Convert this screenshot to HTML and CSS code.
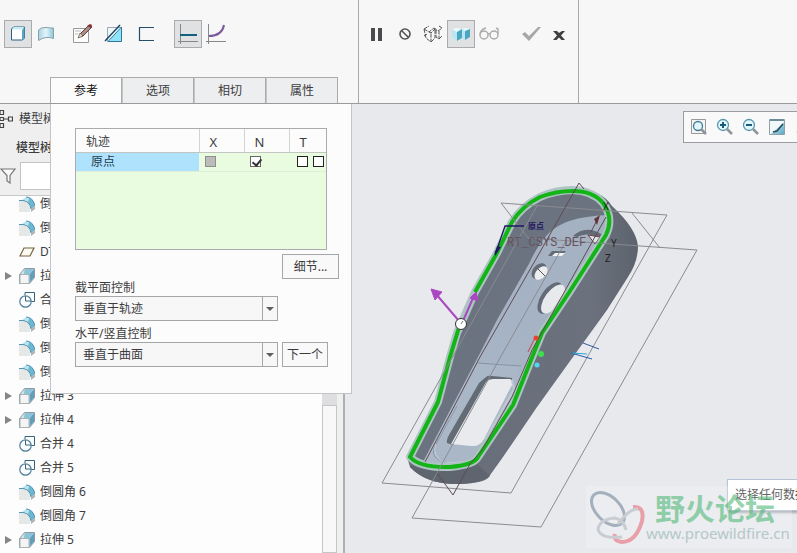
FILE: index.html
```html
<!DOCTYPE html>
<html lang="zh-CN">
<head>
  <meta charset="UTF-8">
  <meta name="viewport" content="width=device-width, initial-scale=1.0">
  <title>扫描</title>
  <link rel="stylesheet" href="styles.css">
</head>
<body>
  <!-- shared tree icons -->
  <svg class="defs" width="0" height="0">
    <defs>
      <linearGradient id="blue" x1="0" y1="0" x2="1" y2="1">
        <stop offset="0" stop-color="#e4f8fd"/>
        <stop offset="1" stop-color="#5aa9c4"/>
      </linearGradient>
      <linearGradient id="sheet" x1="0" y1="0" x2="1" y2="0">
        <stop offset="0" stop-color="#a9d3e0"/>
        <stop offset=".5" stop-color="#e2f6fb"/>
        <stop offset="1" stop-color="#8cc6d8"/>
      </linearGradient>
      <symbol id="round" viewBox="0 0 16 16">
        <path d="M0 5h5q6 2 6 7v4H0z" fill="#e6e8e8"/>
        <path d="M3 4l4-3q8 1 9 9l-4 3q-1-7-9-9z" fill="#b5e5f2"/>
        <path d="M10 2q5 2 6 8l-4 3q0-4-3-6z" fill="#6db7d0"/>
        <path d="M0 4.500h4q7 1 8 8.500M7 1q7 0 9 9" fill="none" stroke="#5593ab"/>
        <path d="M12 13l4-3v3l-4 3z" fill="#a9b6bb"/>
      </symbol>
      <symbol id="extrude" viewBox="0 0 16 16">
        <path d="M.500 6.500l5-6h10v9l-5 6h-10z" fill="#cfe3ea" stroke="#8e9ba1"/>
        <path d="M15 1v8.500L10.500 15V6.500z" fill="#5c9fbb"/>
        <path d="M5.500 1H15l-4.500 5.500H5z" fill="#8dc3d8"/>
        <path d="M1 6.500h9v9H1z" fill="#f5f5f5" stroke="#abb2b5"/>
      </symbol>
      <symbol id="merge" viewBox="0 0 16 16">
        <path d="M6 3V.500h9.500v9H12M6.500 4v5H12" fill="none" stroke="#33637f"/>
        <circle cx="6.500" cy="9.500" r="5.700" fill="none" stroke="#4c7f9b" stroke-width="1.200"/>
      </symbol>
      <symbol id="plane" viewBox="0 0 16 16">
        <path d="M1 12L5 4h10l-4 8z" fill="#fdfbf2" stroke="#75643e" stroke-width="1.200"/>
      </symbol>
    </defs>
  </svg>

  <header class="ribbon">
    <section class="ribbon-main">
      <div class="tools">
        <button class="tool on" title="实体"><svg width="18" height="18"><path d="M2.500 4l2-2h11v11l-2 2h-11z" fill="#fff" stroke="#2d5f7d"/><path d="M13 5l2.500-3v11L13 15z" fill="#5aa5c3"/><path d="M3 4.500L5 2h10l-2 2.500z" fill="#c5edf8"/></svg></button>
        <button class="tool" title="曲面"><svg width="18" height="18"><path d="M1.500 5Q4 2 9 2.500T16.500 3v10.500Q13 12 9 12.500T1.500 15.500z" fill="url(#sheet)" stroke="#8aa0a9"/></svg></button>
        <button class="tool gap-8" title="草绘"><svg width="22" height="22"><path d="M2.500 5.500h15v14h-15z" fill="#fdfdfd" stroke="#999"/><path d="M4 8h6M4 11h3" stroke="#bbb"/><path d="M8 14l2-4 8-8 3 2-9 9z" fill="#b08a84" stroke="#5a4543"/><path d="M7 15l2-5 3 3z" fill="#ecd9b0" stroke="#444" stroke-width=".6"/><path d="M16 3l4 2 1-3-2-1z" fill="#833"/></svg></button>
        <button class="tool gap-4" title="移除材料"><svg width="20" height="20"><path d="M3.500 3.500h14v14h-14z" fill="#eef6f8" stroke="#9ab"/><path d="M17.500 3v14.500H4z" fill="#8fe4fb" stroke="#33789b"/><path d="M1 17L16 1" stroke="#1b4764" stroke-width="1.500"/></svg></button>
        <button class="tool gap-4" title="薄板"><svg width="18" height="18"><path d="M17 2.500H2.500v13H17" fill="none" stroke="#234e6c" stroke-width="1.200"/></svg></button>
        <button class="tool on gap-14" title="恒定截面"><svg width="22" height="22"><path d="M3.500 1v20M1 18.500h20" stroke="#85898c"/><path d="M3 12h17" stroke="#14607f" stroke-width="2"/></svg></button>
        <button class="tool" title="可变截面"><svg width="22" height="22"><path d="M3.500 1v20M1 18.500h20" stroke="#85898c"/><path d="M4 13Q17 13 19 2" fill="none" stroke="#7c5a9e" stroke-width="2"/></svg></button>
      </div>
      <nav class="tabs">
        <button class="tab active">参考</button>
        <button class="tab">选项</button>
        <button class="tab">相切</button>
        <button class="tab">属性</button>
      </nav>
    </section>
    <section class="ribbon-confirm">
      <div class="tools">
        <button class="tool" title="暂停"><svg width="14" height="16"><path d="M1 2h4v13H1zM8 2h4v13H8z" fill="#4a4a4c"/></svg></button>
        <button class="tool" title="无预览"><svg width="14" height="14"><circle cx="7" cy="7" r="5" fill="none" stroke="#555" stroke-width="1.600"/><path d="M3.500 3.500l7 7" stroke="#555" stroke-width="1.600"/></svg></button>
        <button class="tool" title="分离"><svg width="20" height="18"><path d="M1 4l5 3 5-4M1 4l5-3M1 4l2 9 5 4V8M6 7l2 1 4-4M8 17l4-4V3M11 3l4 3 4-3-3-2M13 5v7l3 2V6M16 14l3-3M1 11l3-2" fill="none" stroke="#555" stroke-dasharray="4 1"/></svg></button>
        <button class="tool on" title="连接"><svg width="20" height="16"><path d="M1 3l5-1 4 1 4-1 5 1v8l-5 3-3-2-4 3-6-4z" fill="#e9fafe"/><path d="M6 6l5-3v9l-5 3zM14 5l5-2v8l-5 3z" fill="#4ea5bf"/><path d="M1 3l5 3v9l-5-4zM11 3l3 2v9l-3-2z" fill="#b8e6f2"/></svg></button>
        <button class="tool" title="几何预览"><svg width="20" height="14"><g fill="none" stroke="#aaa" stroke-width="1.400"><circle cx="5" cy="8" r="4"/><circle cx="15" cy="8" r="4"/><path d="M9 7q1-1 2 0M1 7q1-5 6-6M19 7V2l-2-1"/></g></svg></button>
        <button class="tool gap-14" title="确定"><svg width="20" height="16"><path d="M1 8l3-2 4 4 9-9h3L8 15z" fill="#a8a8a8"/></svg></button>
        <button class="tool" title="取消"><svg width="14" height="14"><path d="M1 4h4l2 2 3-2h3L9 8.500l4 4.500H9.500L7 10.500 4.500 13H1l4-4.500z" fill="#3f3f42"/></svg></button>
      </div>
    </section>
  </header>

  <main class="workspace">
    <aside class="sidebar">
      <div class="tree-head">
        <div class="tree-tab"><svg width="13" height="20"><path d="M0 1.500h3.500v4H0zM0 8.500h3.500v3H0zM0 14.500h3.500v4H0zM8.500 8h4v4h-4zM4 10h4" fill="none" stroke="#444" stroke-width="1.200"/></svg>模型树</div>
        <h2 class="tree-title">模型树</h2>
        <div class="tree-filter">
          <svg width="17" height="16"><path d="M1 1h14L10 7.500V15L7 13V7.500z" fill="#fafafa" stroke="#777" stroke-width="1.200"/></svg>
          <input type="text" aria-label="过滤">
        </div>
      </div>
      <div class="tree-body">
        <ul class="tree">
          <li><svg class="ico"><use href="#round"/></svg>倒圆角 1</li>
          <li><svg class="ico"><use href="#round"/></svg>倒圆角 2</li>
          <li><svg class="ico"><use href="#plane"/></svg>DTM1</li>
          <li class="parent"><svg class="ico"><use href="#extrude"/></svg>拉伸 2</li>
          <li><svg class="ico"><use href="#merge"/></svg>合并 3</li>
          <li><svg class="ico"><use href="#round"/></svg>倒圆角 3</li>
          <li><svg class="ico"><use href="#round"/></svg>倒圆角 4</li>
          <li><svg class="ico"><use href="#round"/></svg>倒圆角 5</li>
          <li class="parent"><svg class="ico"><use href="#extrude"/></svg>拉伸 3</li>
          <li class="parent"><svg class="ico"><use href="#extrude"/></svg>拉伸 4</li>
          <li><svg class="ico"><use href="#merge"/></svg>合并 4</li>
          <li><svg class="ico"><use href="#merge"/></svg>合并 5</li>
          <li><svg class="ico"><use href="#round"/></svg>倒圆角 6</li>
          <li><svg class="ico"><use href="#round"/></svg>倒圆角 7</li>
          <li class="parent"><svg class="ico"><use href="#extrude"/></svg>拉伸 5</li>
        </ul>
        <div class="scrollbar"><div class="thumb"></div></div>
      </div>
    </aside>

    <section class="viewport">
      <svg class="model" viewBox="345 104 452 449" preserveAspectRatio="xMinYMin meet">
        <defs>
          <linearGradient id="side" x1="0" y1="0" x2="1" y2="0">
            <stop offset="0" stop-color="#666d78"/>
            <stop offset=".8" stop-color="#6b727d"/>
            <stop offset="1" stop-color="#5d636d"/>
          </linearGradient>
          <linearGradient id="floor" x1="0" y1="0" x2="0" y2="1">
            <stop offset="0" stop-color="#a4b1c1"/>
            <stop offset=".6" stop-color="#a7b4c6"/>
            <stop offset="1" stop-color="#adb9c8"/>
          </linearGradient>
        </defs>

        <!-- outer body -->
        <path d="M573 187Q602 190 612 206Q636 228 638 246Q638 262 628 277L607 310L573 357L537 407L503 457L488 478Q481 484 453 484Q425 483 410 467L407 457L440 400L570 230z" fill="url(#side)"/>
        <path d="M410 465Q430 472 452 471L478 465L490 476Q481 484 453 484Q425 483 410 467z" fill="#5e656f"/>

        <!-- inner wall and floor -->
        <path d="M410 457L438 402L450 357L457 333L475 292L497 253L512 222Q522 206 540 197Q556 191 573 191Q593 191 603 203Q614 218 606 235L570 291L542 333L535 350L513 405L478 457Q474 465 450 467Q422 468 412 461z" fill="#6b7380"/>
        <path d="M607 215Q563 217 548 234Q537 246 530 262L497 320L478 357L470 372L423 462Q440 468 474 461L513 405L535 350L542 333L606 235z" fill="url(#floor)"/>
        <path d="M478 363Q492 360 521 366L510 400L480 454Q470 465 447 463Q430 459 434 448L457 406z" fill="#aab7c7"/>
        <path d="M457 406L434 448Q430 459 447 463" fill="none" stroke="#8c99aa"/>
        <path d="M436 444Q431 455 444 463L475 461" fill="none" stroke="#c5ced9"/>

        <!-- cut-outs -->
        <path d="M486 377Q488 375 492 376L512 378L512 381H490L453 445L447 443Q446 440 449 435L479 383z" fill="#636b75"/>
        <path d="M486 382Q489 379 493 379H510Q514 380 512 385L484 439Q480 447 471 446L451 444z" fill="#e8eaee"/>
        <path d="M512 380L514 389L485 440" fill="none" stroke="#c1c8d3" stroke-width="2"/>
        <ellipse cx="550" cy="298" rx="9" ry="18" transform="rotate(34 550 298)" fill="#636b76"/>
        <ellipse cx="553" cy="299" rx="8" ry="17" transform="rotate(36 553 299)" fill="#e7e9ed"/>
        <ellipse cx="539" cy="271" rx="6" ry="9" transform="rotate(42 539 271)" fill="#636b76"/>
        <ellipse cx="541" cy="273" rx="5" ry="8" transform="rotate(42 541 273)" fill="#eceef0"/>
        <path d="M552 251h14l-4 5h-14z" fill="#636b76"/>
        <path d="M555 253h10l-3 3h-10z" fill="#f0f1f3"/>
        <path d="M573 236Q586 224 603 235L600 239Q588 231 577 237z" fill="#636b76"/>
        <path d="M588 235l12 2-5 7z" fill="#e1e5ea" stroke="#6c4147"/>

        <!-- rim with the selected trajectory -->
        <path class="rim" d="M478 457Q474 465 450 467Q420 468 410 457L438 402L450 357L457 333L475 292L497 253L512 222Q522 206 540 197Q556 190 573 190Q593 191 603 203Q614 218 606 235L570 291L542 333L535 350L513 405z"/>
        <path class="traj" d="M475 292L497 253L512 222Q522 206 540 197Q556 191 573 191Q593 191 603 203Q614 218 606 235L570 291L542 333L535 350L513 405L478 457Q474 465 450 467Q420 468 410 457L438 402L450 357L460 324"/>

        <!-- datum planes -->
        <g class="datum">
          <path d="M501 203L667 215L511 493L382 483L537 206"/>
          <path d="M501 203L528 238L697 250L541 527L412 518L437 473"/>
          <path d="M632 213L660 248M566 241L500 358L437 473"/>
          <path d="M478 363L521 366" stroke="#8492a1"/>
        </g>
        <g class="section">
          <path d="M579 183L540 252L480 357L425 462M579 183L584 189"/>
          <path d="M437 473L453 495L470 464L482 450L512 397L532 350L606 217"/>
          <path d="M591 232l7-14M538 269l7 7"/>
        </g>
        <path d="M600 215l-6 4 3 6z" fill="#64343b"/>
        <path d="M583 343l16 6M571 353l21 6" stroke="#2b58a6"/>
        <path d="M572 353l15 1" stroke="#24a9d0"/>

        <!-- labels -->
        <path d="M524 226H505L495 255M495 253l4-9" fill="none" stroke="#201866" stroke-width="1.300"/>
        <path d="M495 256l2-10 4 1z" fill="#201866"/>
        <text x="528" y="229" class="origin">原点</text>
        <text x="507" y="246" class="csys">RT_CSYS_DEF</text>
        <text x="603" y="210" class="axis">X</text>
        <text x="611" y="247" class="axis">Y</text>
        <text x="605" y="262" class="axis">Z</text>

        <!-- drag handles -->
        <g stroke="#aa48c2" fill="#aa48c2">
          <path d="M459 321L436 294M463 321L473 298" stroke-width="2"/>
          <path d="M431 289l11 3-7 8z"/>
          <path d="M476 292l2 9-8-3z"/>
        </g>
        <circle cx="461" cy="324" r="5.500" fill="#fff" stroke="#333"/>
        <path d="M461 324l2-3" stroke="#777"/>
        <path d="M528 352l7-14" stroke="#c64242"/>
        <circle cx="536" cy="338" r="2.500" fill="#ec4234"/>
        <circle cx="541" cy="354" r="3" fill="#3be04c"/>
        <circle cx="537" cy="365" r="2.500" fill="#4fd9ee"/>
      </svg>

      <div class="view-bar">
        <button title="重新调整"><svg width="18" height="18"><path d="M1.500 1.500h14v14h-14z" fill="#f4f4f4" stroke="#999"/><circle cx="8" cy="8" r="4.500" fill="#dff6fc" stroke="#427b91" stroke-width="1.300"/><path d="M11 11l5 5" stroke="#8e9599" stroke-width="2.500"/></svg></button>
        <button title="放大"><svg width="18" height="18"><circle cx="7" cy="7" r="5.500" fill="#e3f7fc" stroke="#5896ad" stroke-width="1.300"/><path d="M4 7h6M7 4v6" stroke="#185a79" stroke-width="2"/><path d="M11 11l5 5" stroke="#8e9599" stroke-width="2.500"/></svg></button>
        <button title="缩小"><svg width="18" height="18"><circle cx="7" cy="7" r="5.500" fill="#e3f7fc" stroke="#5896ad" stroke-width="1.300"/><path d="M4 7h6" stroke="#185a79" stroke-width="2"/><path d="M11 11l5 5" stroke="#8e9599" stroke-width="2.500"/></svg></button>
        <button title="重画"><svg width="18" height="18"><path d="M1.500 1.500h15v15h-15z" fill="#f3f8fa" stroke="#8fa0a7"/><path d="M16 4v12H3z" fill="url(#blue)"/><path d="M2 1h14v2H2z" fill="#6d8c99"/><path d="M5 14l4-1 6-7" fill="none" stroke="#2d4857" stroke-width="1.500"/></svg></button>
        <button title="显示样式"><svg width="18" height="18"><path d="M2 14l6-5v6z" fill="#aaa"/></svg></button>
      </div>

      <div class="tooltip">选择任何数据</div>
      <div class="watermark">
        <svg width="58" height="56" fill="none">
          <ellipse cx="20" cy="20" rx="12" ry="20" transform="rotate(-45 20 20)" stroke="#a3afbd" stroke-width="3"/>
          <path d="M45 18Q57 17 54 32Q48 53 34 53Q25 52 27 45" stroke="#e8a0a8" stroke-width="4"/>
          <path d="M30 35Q42 19 50 20M34 48Q12 50 10 40Q12 30 27 29Q36 31 38 41" stroke="#c9cdd3" stroke-width="3"/>
        </svg>
        <div class="brand"><strong>野火论坛</strong><span>www.proewildfire.cn</span></div>
      </div>
    </section>

    <form class="panel">
      <div class="refs">
        <table>
          <thead>
            <tr><th class="col-name">轨迹</th><th>X</th><th>N</th><th class="col-t">T</th></tr>
          </thead>
          <tbody>
            <tr>
              <td class="selected">原点</td>
              <td><input type="checkbox" aria-label="X" disabled></td>
              <td><input type="checkbox" aria-label="N" checked></td>
              <td class="pair"><input type="checkbox" aria-label="T 1"><input type="checkbox" aria-label="T 2"></td>
            </tr>
          </tbody>
        </table>
      </div>
      <div class="detail-row"><button type="button" class="btn detail">细节...</button></div>
      <label for="plane-control">截平面控制</label>
      <div class="field">
        <div class="select"><select id="plane-control"><option>垂直于轨迹</option></select></div>
      </div>
      <label for="horizontal-control">水平/竖直控制</label>
      <div class="field">
        <div class="select"><select id="horizontal-control"><option>垂直于曲面</option></select></div>
        <button type="button" class="btn">下一个</button>
      </div>
    </form>
  </main>
</body>
</html>
```

FILE: styles.css
```css
* { box-sizing: border-box; }
body {
  margin: 0;
  height: 100vh;
  display: flex;
  flex-direction: column;
  overflow: hidden;
  font-family: "Noto Sans", "Noto Sans CJK SC", sans-serif;
  font-size: 12px;
  line-height: 16px;
  color: #3c3c3e;
  background: #f7f7f7;
}
button, input, select {
  font: inherit;
  color: inherit;
  margin: 0;
}
svg { flex: none; }
.defs { position: absolute; }

/* ribbon */
.ribbon {
  display: flex;
  height: 104px;
  flex: none;
  border-bottom: 1px solid #9b9b9d;
}
.ribbon-main {
  width: 358px;
  display: flex;
  flex-direction: column;
  justify-content: space-between;
}
.ribbon-confirm {
  width: 221px;
  border: solid #a9a9ab;
  border-width: 0 1px;
}
.tools {
  display: flex;
  padding: 20px 4px 0;
}
.tool {
  display: flex;
  align-items: center;
  justify-content: center;
  width: 28px;
  height: 28px;
  padding: 0;
  border: 1px solid transparent;
  background: none;
}
.tool.on {
  background: #dfe1e2;
  border-color: #a9abac;
}
.gap-4 { margin-left: 4px; }
.gap-8 { margin-left: 8px; }
.gap-14 { margin-left: 14px; }
.tabs {
  display: flex;
  padding-left: 50px;
}
.tab {
  width: 72px;
  height: 26px;
  padding: 0;
  border: solid #aaabad;
  border-width: 1px 1px 0;
  background: #edeeef;
}
.tab + .tab { border-left-color: #c4c5c7; }
.tab.active {
  background: #fcfcfc;
  color: #111;
}

/* model tree */
.workspace {
  position: relative;
  display: flex;
  flex: 1;
  min-height: 0;
}
.sidebar {
  width: 345px;
  flex: none;
  display: flex;
  flex-direction: column;
  background: #efeff0;
  border-right: 2px solid #aeb0b4;
}
.tree-head {
  height: 92px;
  flex: none;
  border-bottom: 1px solid #c8c8ca;
}
.tree-tab {
  display: flex;
  align-items: center;
  gap: 6px;
  height: 30px;
}
.tree-title {
  margin: 0;
  padding: 6px 16px;
  font-size: 12px;
  font-weight: 500;
}
.tree-filter {
  display: flex;
  align-items: center;
  gap: 3px;
}
.tree-filter input {
  width: 200px;
  height: 28px;
  border: 1px solid #c3c3c5;
  background: #fff;
}
.tree-body {
  display: flex;
  flex: 1;
  min-height: 0;
  margin-right: 6px;
  overflow: hidden;
  background: #fdfdfd;
}
.tree {
  flex: 1;
  margin: -4px 0 0;
  padding: 0;
  list-style: none;
}
.tree li {
  display: flex;
  align-items: center;
  gap: 5px;
  height: 24px;
  padding-left: 19px;
}
.tree .parent { padding-left: 5px; }
.tree .parent::before {
  content: "";
  border: solid transparent;
  border-width: 4px 0 4px 7px;
  border-left-color: #858585;
  margin-right: 2px;
}
.ico {
  width: 16px;
  height: 16px;
}
.scrollbar {
  width: 15px;
  padding-top: 209px;
  background: #dedee0;
}
.thumb {
  height: 100%;
  border: 1px solid #c5c5c7;
  background: #f8f8f9;
}

/* references panel */
.panel {
  position: absolute;
  left: 50px;
  top: 0;
  width: 302px;
  padding: 24px 12px 26px 24px;
  border: solid #c3c4c8;
  border-width: 0 1px 1px;
  background: #fcfcfc;
}
.panel label {
  display: block;
  height: 16px;
}
.refs {
  width: 252px;
  height: 122px;
  border: 1px solid #a9abac;
  background: #eafcdf;
}
.refs table {
  width: 100%;
  table-layout: fixed;
  border-collapse: collapse;
}
.refs th {
  height: 23px;
  padding: 3px 0 0 10px;
  font-weight: normal;
  font-size: 13px;
  text-align: left;
  background: #fcfcfc;
  border-left: 1px solid #d2d4d2;
  border-bottom: 1px solid #c2c6c1;
}
.refs .col-name {
  width: 123px;
  font-size: 12px;
  border-left: 0;
}
.refs .col-t { width: 37px; }
.refs td {
  height: 19px;
  padding: 0 0 0 6px;
  line-height: 0;
  border-bottom: 1px solid #deefd5;
}
.refs .selected {
  padding-left: 15px;
  line-height: 16px;
  background: #afe2fd;
  color: #1d3a50;
}
.refs .pair {
  padding-left: 8px;
  white-space: nowrap;
}
.refs input {
  appearance: none;
  width: 11px;
  height: 11px;
  border: 1px solid #222;
  background: #fff;
}
.refs input + input { margin-left: 5px; }
.refs input:disabled {
  border-color: #8d908c;
  background: #bcbdbb;
}
.refs input:checked {
  border-color: #666;
}
.refs input:checked::before {
  content: "";
  display: block;
  width: 4px;
  height: 7px;
  margin-left: 3px;
  border: solid #333;
  border-width: 0 2px 2px 0;
  transform: rotate(40deg);
}
.detail-row {
  display: flex;
  justify-content: flex-end;
  padding: 4px 0 1px;
}
.btn {
  height: 25px;
  padding: 0 4px;
  border: 1px solid #a5a6a8;
  background: #f9f9f9;
}
.btn.detail { width: 57px; }
.field {
  display: flex;
  gap: 4px;
  margin-bottom: 5px;
}
.field:last-child { margin-bottom: 0; }
.select {
  position: relative;
  width: 203px;
}
.select select {
  appearance: none;
  display: block;
  width: 100%;
  height: 25px;
  padding: 0 7px;
  border: 1px solid #a5a6a8;
  border-radius: 0;
  background: linear-gradient(#a5a6a8, #a5a6a8) right 14px top / 1px 100% no-repeat #f7f7f7;
}
.select::after {
  content: "";
  position: absolute;
  right: 4px;
  top: 11px;
  border: solid transparent;
  border-width: 4px 4px 0;
  border-top-color: #5e5e60;
  pointer-events: none;
}

/* graphics window */
.viewport {
  position: relative;
  flex: 1;
  min-width: 0;
  overflow: hidden;
  background: #e8e9ed;
}
.model {
  display: block;
  width: 100%;
  height: 100%;
}
.rim {
  fill: none;
  stroke: #adc4c2;
  stroke-width: 8;
  stroke-linejoin: round;
}
.traj {
  fill: none;
  stroke: #12b515;
  stroke-width: 4;
  stroke-linejoin: round;
}
.datum {
  fill: none;
  stroke: #8a8b90;
}
.section {
  fill: none;
  stroke: #5f4b52;
}
.origin {
  font-size: 8px;
  font-weight: bold;
  fill: #241760;
}
.csys {
  font: 12px "Liberation Mono", monospace;
  fill: #67515c;
}
.axis {
  font-size: 10px;
  fill: #222;
}
.view-bar {
  position: absolute;
  top: 7px;
  right: 0;
  display: flex;
  width: 114px;
  height: 32px;
  padding-left: 2px;
  overflow: hidden;
  border: 1px solid #9c9da0;
  border-right: 0;
  background: #f9f9f9;
}
.view-bar button {
  display: flex;
  align-items: center;
  justify-content: center;
  flex: none;
  width: 26px;
  padding: 0;
  border: 0;
  background: none;
}
.tooltip {
  position: absolute;
  right: 0;
  bottom: 42px;
  width: 70px;
  height: 32px;
  padding: 7px 0 0 7px;
  overflow: hidden;
  white-space: nowrap;
  border: 1px solid #b5c5d7;
  border-right: 0;
  background: #fff;
  box-shadow: 1px 2px 2px #a9abb0;
}
.watermark {
  position: absolute;
  right: 5px;
  bottom: 5px;
  display: flex;
  align-items: center;
  width: 206px;
  height: 62px;
  padding-left: 2px;
  background: rgba(255, 255, 255, .2);
}
.brand {
  display: flex;
  flex-direction: column;
}
.brand strong {
  padding-left: 9px;
  font-family: "Noto Sans CJK SC", sans-serif;
  font-size: 30px;
  line-height: 32px;
  color: rgba(80, 184, 120, .6);
}
.brand span {
  font-size: 15px;
  line-height: 20px;
  color: #b3c8c8;
}
```
